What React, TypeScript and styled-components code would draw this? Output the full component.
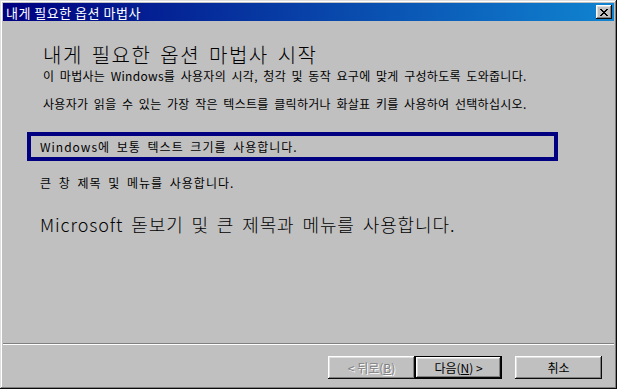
import styled, {createGlobalStyle} from "styled-components";

const GlobalStyle = createGlobalStyle`
    html, body {
        margin: 0;
        padding: 0;
        background: #c0c0c0;
    }
    body {
        font-family: "Noto Sans CJK KR", "DejaVu Sans", sans-serif;
        -webkit-font-smoothing: none;
    }
`;

const Window = styled.div`
    width: 617px;
    height: 389px;
    box-sizing: border-box;
    padding: 3px;
    background: #c0c0c0;
    box-shadow: inset -1px -1px #0a0a0a, inset 1px 1px #dfdfdf,
    inset -2px -2px #808080, inset 2px 2px #ffffff;
    display: flex;
    flex-direction: column;
`;

const TitleBar = styled.div`
    height: 18px;
    flex: 0 0 auto;
    display: flex;
    align-items: center;
    justify-content: space-between;
    padding: 0 2px 0 3px;
    background: linear-gradient(90deg, #000080, #1084d0);
    color: #ffffff;
    font-size: 13px;
    letter-spacing: 0.5px;
`;

const CloseButton = styled.button`
    width: 16px;
    height: 14px;
    padding: 0;
    border: none;
    background: #c0c0c0;
    box-shadow: inset -1px -1px #0a0a0a, inset 1px 1px #ffffff,
    inset -2px -2px #808080, inset 2px 2px #dfdfdf;
    display: flex;
    align-items: center;
    justify-content: center;
`;

const Body = styled.div`
    flex: 1 1 auto;
    padding: 21px 0 0 24px;
    color: #000000;
`;

const Heading = styled.h1`
    margin: 0 0 0 16px;
    font-size: 20px;
    font-weight: 300;
    letter-spacing: 1.5px;
    word-spacing: 3px;
    line-height: 26px;
`;

const Text = styled.p`
    margin: 0 0 0 16px;
    font-size: 12px;
    line-height: 16px;
    letter-spacing: 0.3px;
    word-spacing: 2.5px;
`;

const Prompt = styled(Text)`
    margin-top: 12px;
`;

const OptionList = styled.div`
    margin-top: 20px;
    display: flex;
    flex-direction: column;
    gap: 7px;
`;

const Option = styled.div<{ $selected?: boolean; $large?: boolean }>`
    width: 531px;
    box-sizing: border-box;
    border: 4px solid ${props => props.$selected ? "#000080" : "transparent"};
    padding: 0 0 0 9px;
    height: ${props => props.$large ? 39 : 29}px;
    display: flex;
    align-items: center;
    font-size: ${props => props.$large ? 18 : 12}px;
    font-weight: ${props => props.$large ? 300 : 400};
    word-spacing: 3px;
    letter-spacing: ${props => props.$large ? 0.9 : 1}px;
`;

const Footer = styled.div`
    flex: 0 0 auto;
    border-top: 1px solid #808080;
    box-shadow: inset 0 1px #ffffff;
    padding: 12px 12px 7px 0;
    display: flex;
    justify-content: flex-end;
`;

const Button = styled.button<{ $default?: boolean }>`
    width: 87px;
    height: 23px;
    font-family: inherit;
    font-size: 12px;
    color: #000000;
    background: #c0c0c0;
    border: ${props => props.$default ? "1px solid #000000" : "none"};
    box-sizing: border-box;
    box-shadow: inset -1px -1px #0a0a0a, inset 1px 1px #ffffff,
    inset -2px -2px #808080, inset 2px 2px #dfdfdf;
    padding: 0;

    &:disabled {
        color: #808080;
        text-shadow: 1px 1px #ffffff;
    }

    &.cancel {
        margin-left: 13px;
    }
`;

export default function App() {
    return <>
        <GlobalStyle/>
        <Window>
            <TitleBar>
                <span>내게 필요한 옵션 마법사</span>
                <CloseButton aria-label="닫기">
                    <svg width="8" height="7" viewBox="0 0 8 7">
                        <path d="M0 0h2v1h1v1h2V1h1V0h2v1H7v1H6v1H5v1h1v1h1v1h1v1H6V6H5V5H3v1H2v1H0V6h1V5h1V4h1V3H2V2H1V1H0z"
                              fill="#000"/>
                    </svg>
                </CloseButton>
            </TitleBar>
            <Body>
                <Heading>내게 필요한 옵션 마법사 시작</Heading>
                <Text>이 마법사는 Windows를 사용자의 시각, 청각 및 동작 요구에 맞게 구성하도록 도와줍니다.</Text>
                <Prompt>사용자가 읽을 수 있는 가장 작은 텍스트를 클릭하거나 화살표 키를 사용하여 선택하십시오.</Prompt>
                <OptionList>
                    <Option $selected>Windows에 보통 텍스트 크기를 사용합니다.</Option>
                    <Option>큰 창 제목 및 메뉴를 사용합니다.</Option>
                    <Option $large>Microsoft 돋보기 및 큰 제목과 메뉴를 사용합니다.</Option>
                </OptionList>
            </Body>
            <Footer>
                <Button disabled>&lt; 뒤로(<u>B</u>)</Button>
                <Button $default>다음(<u>N</u>) &gt;</Button>
                <Button className="cancel">취소</Button>
            </Footer>
        </Window>
    </>;
}
